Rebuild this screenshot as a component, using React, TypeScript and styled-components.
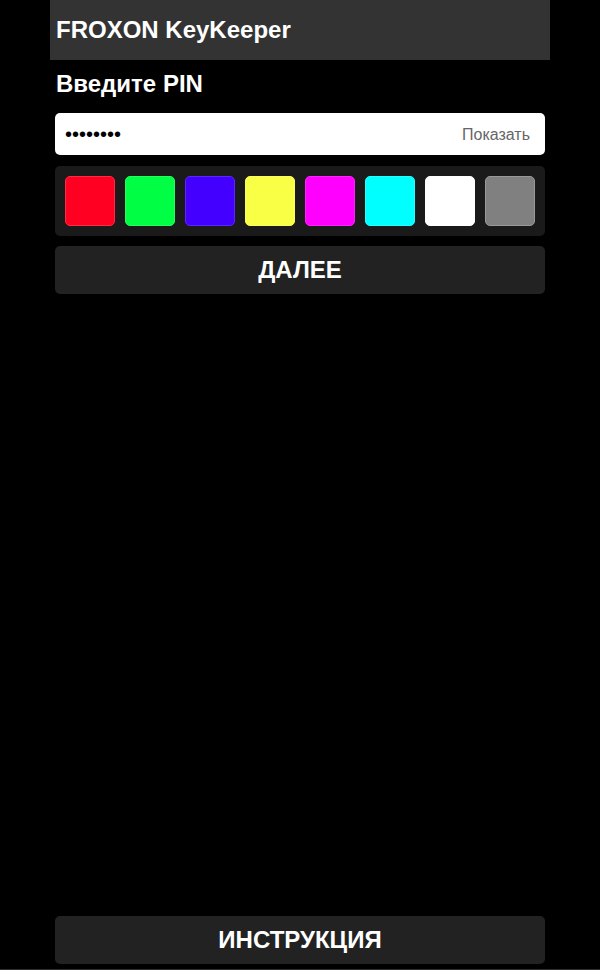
import React, { useState } from "react";
import styled, { createGlobalStyle } from "styled-components";

const Global = createGlobalStyle`
  html, body { margin: 0; padding: 0; background: #000; }
  body { font-family: "Liberation Sans", Arial, sans-serif; color: #fff; }
  * { box-sizing: border-box; }
`;

const Page = styled.div`
  height: 970px;
  display: flex;
  flex-direction: column;
  overflow: hidden;
`;

const Container = styled.div`
  width: 500px;
  margin: 0 auto;
  flex: 1;
  display: flex;
  flex-direction: column;
`;

const Header = styled.header`
  height: 60px;
  background: #333;
  display: flex;
  align-items: center;
  padding: 0 6px 1px;
`;

const Title = styled.h1`
  margin: 0;
  font-size: 24px;
  font-weight: bold;
  color: #fff;
`;

const Content = styled.main`
  flex: 1;
  display: flex;
  flex-direction: column;
  padding: 0 5px 5px;
`;

const Label = styled.h2`
  margin: 10px 0 0 1px;
  font-size: 24px;
  font-weight: bold;
  line-height: 28px;
`;

const InputWrap = styled.div`
  margin-top: 15px;
  height: 42px;
  background: #fff;
  border-radius: 5px;
  display: flex;
  align-items: center;
  padding: 1px 15px 0 10px;
`;

const PinInput = styled.input`
  flex: 1;
  border: none;
  outline: none;
  background: transparent;
  font-family: "Liberation Sans", Arial, sans-serif;
  font-size: 20px;
  color: #000;
  padding: 0;
`;

const ShowButton = styled.button`
  border: none;
  background: transparent;
  color: #666;
  font-family: "Liberation Sans", Arial, sans-serif;
  font-size: 16px;
  padding: 0;
  cursor: pointer;
`;

const Palette = styled.div`
  margin-top: 11px;
  background: #1a1a1a;
  border-radius: 5px;
  padding: 10px;
  display: flex;
  gap: 10px;
`;

const Swatch = styled.button<{ $c: string; $b: string }>`
  width: 50px;
  height: 50px;
  border-radius: 5px;
  background: ${(p) => p.$c};
  border: 1px solid ${(p) => p.$b};
  padding: 0;
  cursor: pointer;
`;

const ActionButton = styled.button`
  width: 100%;
  height: 48px;
  background: #222;
  border: none;
  border-radius: 5px;
  color: #fff;
  font-family: "Liberation Sans", Arial, sans-serif;
  font-size: 24px;
  font-weight: bold;
  cursor: pointer;
`;

const NextButton = styled(ActionButton)`
  margin-top: 10px;
`;

const Spacer = styled.div`
  flex: 1;
`;

const BottomLine = styled.div`
  height: 1px;
  background: #2b3035;
`;

const colors: [string, string][] = [
  ["#ff0022", "#ff2a44"],
  ["#00ff44", "#22ff5a"],
  ["#4400ff", "#5a28ff"],
  ["#f8ff44", "#f8ff5a"],
  ["#ff00ff", "#ff22ff"],
  ["#00ffff", "#22ffff"],
  ["#ffffff", "#ffffff"],
  ["#808080", "#999999"],
];

export default function App() {
  const [show, setShow] = useState(false);
  return (
    <Page>
      <Global />
      <Container>
        <Header>
          <Title>FROXON KeyKeeper</Title>
        </Header>
        <Content>
          <Label>Введите PIN</Label>
          <InputWrap>
            <PinInput type={show ? "text" : "password"} defaultValue="12345678" />
            <ShowButton onClick={() => setShow(!show)}>Показать</ShowButton>
          </InputWrap>
          <Palette>
            {colors.map(([c, b]) => (
              <Swatch key={c} $c={c} $b={b} />
            ))}
          </Palette>
          <NextButton>ДАЛЕЕ</NextButton>
          <Spacer />
          <ActionButton>ИНСТРУКЦИЯ</ActionButton>
        </Content>
      </Container>
      <BottomLine />
    </Page>
  );
}
